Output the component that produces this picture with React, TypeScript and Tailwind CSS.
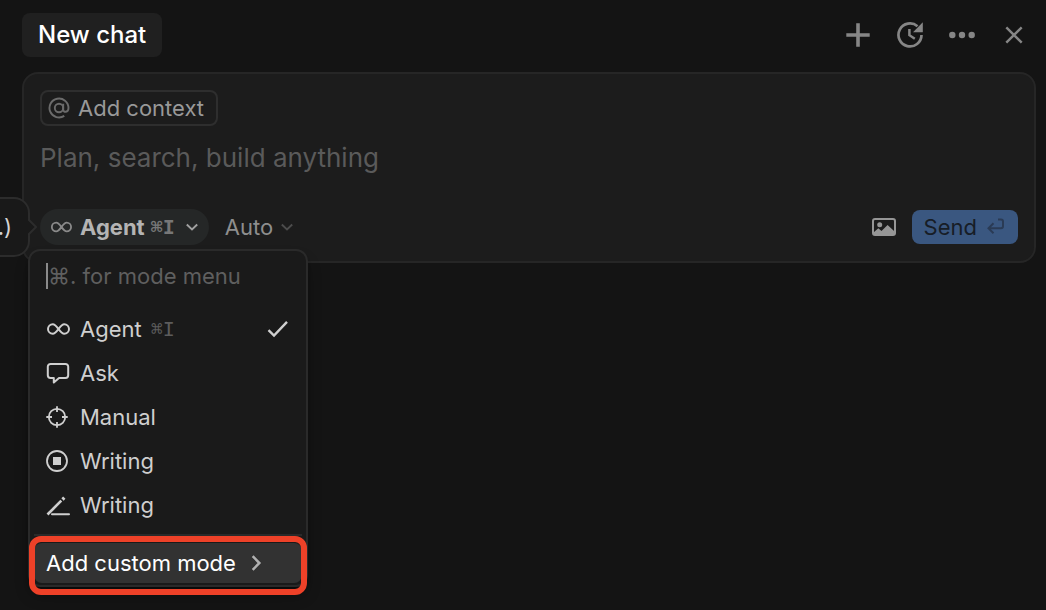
import type { ReactNode } from 'react';
import { clsx } from 'clsx';

interface IconProps {
  className?: string;
}

function InfinityIcon({ className }: IconProps) {
  return (
    <svg viewBox="0 0 24 24" className={clsx('shrink-0', className)} fill="none" stroke="currentColor" strokeWidth={2} aria-hidden>
      <path d="M12.5 12C10.300 9 9.100 7.200 6.800 7.200a4.800 4.800 0 0 0 0 9.600C9.100 16.800 10.300 15 12.500 12s3.400-4.800 5.700-4.800a4.800 4.800 0 0 1 0 9.600C15.900 16.800 14.700 15 12.500 12Z" />
    </svg>
  );
}

function ChatIcon() {
  return (
    <svg viewBox="0 0 24 24" className="size-6" fill="none" stroke="currentColor" strokeWidth={2} strokeLinejoin="round" aria-hidden>
      <path d="M4.500 3h15A2.700 2.700 0 0 1 22.200 5.700v8.600a2.700 2.700 0 0 1-2.700 2.700H13l-5.200 4.500V17H4.500a2.700 2.700 0 0 1-2.700-2.700V5.700A2.700 2.700 0 0 1 4.500 3Z" />
    </svg>
  );
}

function TargetIcon() {
  return (
    <svg viewBox="0 0 24 24" className="size-6" fill="none" stroke="currentColor" strokeWidth={1.800} aria-hidden>
      <circle cx="11" cy="12" r="8.200" />
      <path d="M11 1.300v5.700M11 17v5.700M.3 12H6M16 12h5.700" />
    </svg>
  );
}

function StopIcon() {
  return (
    <svg viewBox="0 0 24 24" className="size-6" fill="none" stroke="currentColor" strokeWidth={1.800} aria-hidden>
      <circle cx="11" cy="12" r="10" />
      <rect x="7" y="8" width="8" height="8" fill="currentColor" stroke="none" />
    </svg>
  );
}

function PencilIcon() {
  return (
    <svg viewBox="0 0 24 24" className="size-6" fill="none" stroke="currentColor" aria-hidden>
      <path d="M1.500 21.500 15.300 7.700" strokeWidth={2.600} />
      <path d="m16.500 6.500 1.800-1.800" strokeWidth={3.200} />
      <path d="M6 21.300h17" strokeWidth={2} strokeLinecap="round" />
    </svg>
  );
}

function ChevronIcon({ className }: IconProps) {
  return (
    <svg viewBox="0 0 12 12" className={clsx('shrink-0', className)} fill="none" stroke="currentColor" strokeWidth={1.900} aria-hidden>
      <path d="m.8 3.500 5.200 5 5.200-5" />
    </svg>
  );
}

function CheckIcon() {
  return (
    <svg viewBox="0 0 24 24" className="size-6" fill="none" stroke="currentColor" strokeWidth={2.400} aria-hidden>
      <path d="m2.500 13.200 5.500 5.300L21 4.800" />
    </svg>
  );
}

const HEADER_ACTIONS: { label: string; icon: ReactNode }[] = [
  { label: 'New chat tab', icon: <path d="M14 2.300v23.400M2.300 14h23.400" strokeWidth={3.600} /> },
  {
    label: 'Chat history',
    icon: (
      <>
        <path d="M25.500 14A11.500 11.500 0 1 1 21.500 5.200" strokeWidth={2.700} />
        <path d="M26.800 1.200v10H17Z" fill="currentColor" stroke="none" />
        <path d="M13.400 8v6.200l5.400 3.600" strokeWidth={2.500} />
      </>
    )
  },
  {
    label: 'More actions',
    icon: (
      <g fill="currentColor" stroke="none">
        <circle cx="4.300" cy="14" r="3.200" />
        <circle cx="14" cy="14" r="3.200" />
        <circle cx="23.700" cy="14" r="3.200" />
      </g>
    )
  },
  { label: 'Close', icon: <path d="m6.300 6.300 15.400 15.400M21.700 6.300 6.300 21.700" strokeWidth={2.400} /> }
];

const MODES: { id: string; name: string; icon: ReactNode; shortcut?: string; selected?: boolean }[] = [
  { id: 'agent', name: 'Agent', icon: <InfinityIcon className="size-6" />, shortcut: '⌘I', selected: true },
  { id: 'ask', name: 'Ask', icon: <ChatIcon /> },
  { id: 'manual', name: 'Manual', icon: <TargetIcon /> },
  { id: 'writing-stop', name: 'Writing', icon: <StopIcon /> },
  { id: 'writing-pencil', name: 'Writing', icon: <PencilIcon /> }
];

function Shortcut({ children, className }: { children: ReactNode; className?: string }) {
  return <kbd className={clsx("font-['DejaVu_Sans_Mono',monospace] text-[20px]", className)}>{children}</kbd>;
}

function Header() {
  return (
    <header className="flex items-center justify-between pt-[13px] pr-[18px] pl-[22px]">
      <button type="button" className="h-11 rounded-lg bg-[#202020] px-4 text-[24px] font-medium text-white">
        New chat
      </button>
      <div className="flex gap-6 text-[#868686]">
        {HEADER_ACTIONS.map((action) => (
          <button key={action.label} type="button" aria-label={action.label} className="size-7">
            <svg viewBox="0 0 28 28" className="size-7" fill="none" stroke="currentColor" aria-hidden>
              {action.icon}
            </svg>
          </button>
        ))}
      </div>
    </header>
  );
}

function ModeMenu() {
  return (
    <div className="absolute top-full -left-3 z-20 mt-1 w-[280px] rounded-xl border-2 border-[#2a2a2a] bg-[#1a1a1a] p-1 pb-[2px] text-[22px] text-[#cfcfcf] shadow-lg shadow-black/40">
      <div className="mb-[10px] flex h-[42px] items-center pl-3">
        <span className="h-[26px] w-[2px] shrink-0 bg-[#8a8a8a]" />
        <input
          type="text"
          aria-label="Filter modes"
          placeholder="⌘. for mode menu"
          className="w-full min-w-0 bg-transparent outline-none placeholder:text-[#5f5f5f]"
        />
      </div>
      <ul>
        {MODES.map((mode) => (
          <li key={mode.id}>
            <button type="button" className="flex h-11 w-full items-center pr-3 pl-3">
              <span className="mr-[10px]">{mode.icon}</span>
              {mode.name}
              {mode.shortcut && <Shortcut className="ml-[9px] text-[#5c5c5c]">{mode.shortcut}</Shortcut>}
              {mode.selected && (
                <span className="ml-auto">
                  <CheckIcon />
                </span>
              )}
            </button>
          </li>
        ))}
      </ul>
      <hr className="mt-[7px] mb-[7px] border-t-2 border-[#2a2a2a]" />
      <div className="relative">
        <button type="button" className="flex h-10 w-full items-center gap-3 rounded-lg bg-[#323232] pl-3 text-white">
          Add custom mode
          <ChevronIcon className="size-4 -rotate-90 text-[#b0b0b0]" />
        </button>
        <div className="pointer-events-none absolute -inset-x-[5px] -top-[7px] -bottom-3 rounded-xl border-[6px] border-[#ee4128]" />
      </div>
    </div>
  );
}

function Tooltip() {
  return (
    <div className="absolute top-1/2 right-full z-10 mr-[10px] flex h-[60px] w-24 -translate-y-1/2 items-center justify-end rounded-2xl border-2 border-[#2c2c2c] bg-[#191919] pr-4 text-[22px] text-[#d4d4d4]">
      .)
      <svg viewBox="0 0 9 18" className="absolute -right-[9px] h-[18px] w-[9px]" aria-hidden>
        <path d="M0 1 8 9 0 17" fill="#191919" stroke="#2c2c2c" strokeWidth={2} />
      </svg>
    </div>
  );
}

function ComposerToolbar() {
  return (
    <div className="flex items-center">
      <div className="relative">
        <button type="button" className="flex h-9 items-center rounded-full bg-[#252727] pr-[11px] pl-[10px] text-[22px] font-bold text-[#b4b4b4]">
          <InfinityIcon className="mr-2 size-[22px] text-[#8a8a8a]" />
          Agent
          <Shortcut className="mr-[11px] ml-[6px] text-[#777777]">⌘I</Shortcut>
          <ChevronIcon className="size-3 text-[#a0a0a0]" />
        </button>
        <Tooltip />
        <ModeMenu />
      </div>
      <button type="button" className="ml-4 flex h-9 items-center gap-2 text-[22px] text-[#8e8e8e]">
        Auto
        <ChevronIcon className="size-3 text-[#4c4c4c]" />
      </button>
      <button type="button" aria-label="Attach image" className="mr-4 ml-auto text-[#969696]">
        <svg viewBox="0 0 24 20" className="h-5 w-6" fill="none" aria-hidden>
          <rect x="1" y="2" width="22" height="16" rx="2" stroke="currentColor" strokeWidth={2} />
          <circle cx="7.700" cy="7.700" r="2.500" fill="currentColor" />
          <path d="M1.500 18v-2.500l4.800-4.200 3.200 2.700L15.600 8l7 6.500V18Z" fill="currentColor" />
        </svg>
      </button>
      <button type="submit" className="flex h-[34px] items-center gap-[9px] rounded-lg bg-[#3a5780] px-3 text-[22px] text-[#171d26]">
        Send
        <svg viewBox="0 0 20 20" className="size-5" fill="none" stroke="#2a3b55" strokeWidth={2} aria-hidden>
          <path d="M12 2.500h3A2 2 0 0 1 17 4.500v4.800a2 2 0 0 1-2 2H2.500M7.500 6.300l-5 5 5 5" />
        </svg>
      </button>
    </div>
  );
}

function Composer() {
  return (
    <form
      onSubmit={(event) => event.preventDefault()}
      className="mt-[15px] mr-[10px] ml-[22px] rounded-2xl border-2 border-[#262626] bg-[#1c1c1c] p-4"
    >
      <button type="button" className="flex h-9 items-center gap-2 rounded-lg border-2 border-[#2e2e2e] pr-3 pl-[6px] text-[22px] text-[#999999]">
        <svg viewBox="0 0 22 22" className="size-[22px]" fill="none" stroke="#6b6b6b" strokeWidth={1.900} aria-hidden>
          <circle cx="11" cy="11" r="4.200" />
          <path d="M15.200 6.800v5.700c0 3.500 5.300 3 5.300-1.500a9.500 9.500 0 1 0-4.200 7.900" />
        </svg>
        Add context
      </button>
      <textarea
        aria-label="Message"
        placeholder="Plan, search, build anything"
        className="mt-4 block h-[67px] w-full resize-none bg-transparent text-[26px] leading-8 text-[#d4d4d4] outline-none placeholder:text-[#5a5a5a]"
      />
      <ComposerToolbar />
    </form>
  );
}

export default function App() {
  return (
    <div className="min-h-screen overflow-hidden bg-[#141414] font-[Inter,'Liberation_Sans',sans-serif]">
      <Header />
      <Composer />
    </div>
  );
}
